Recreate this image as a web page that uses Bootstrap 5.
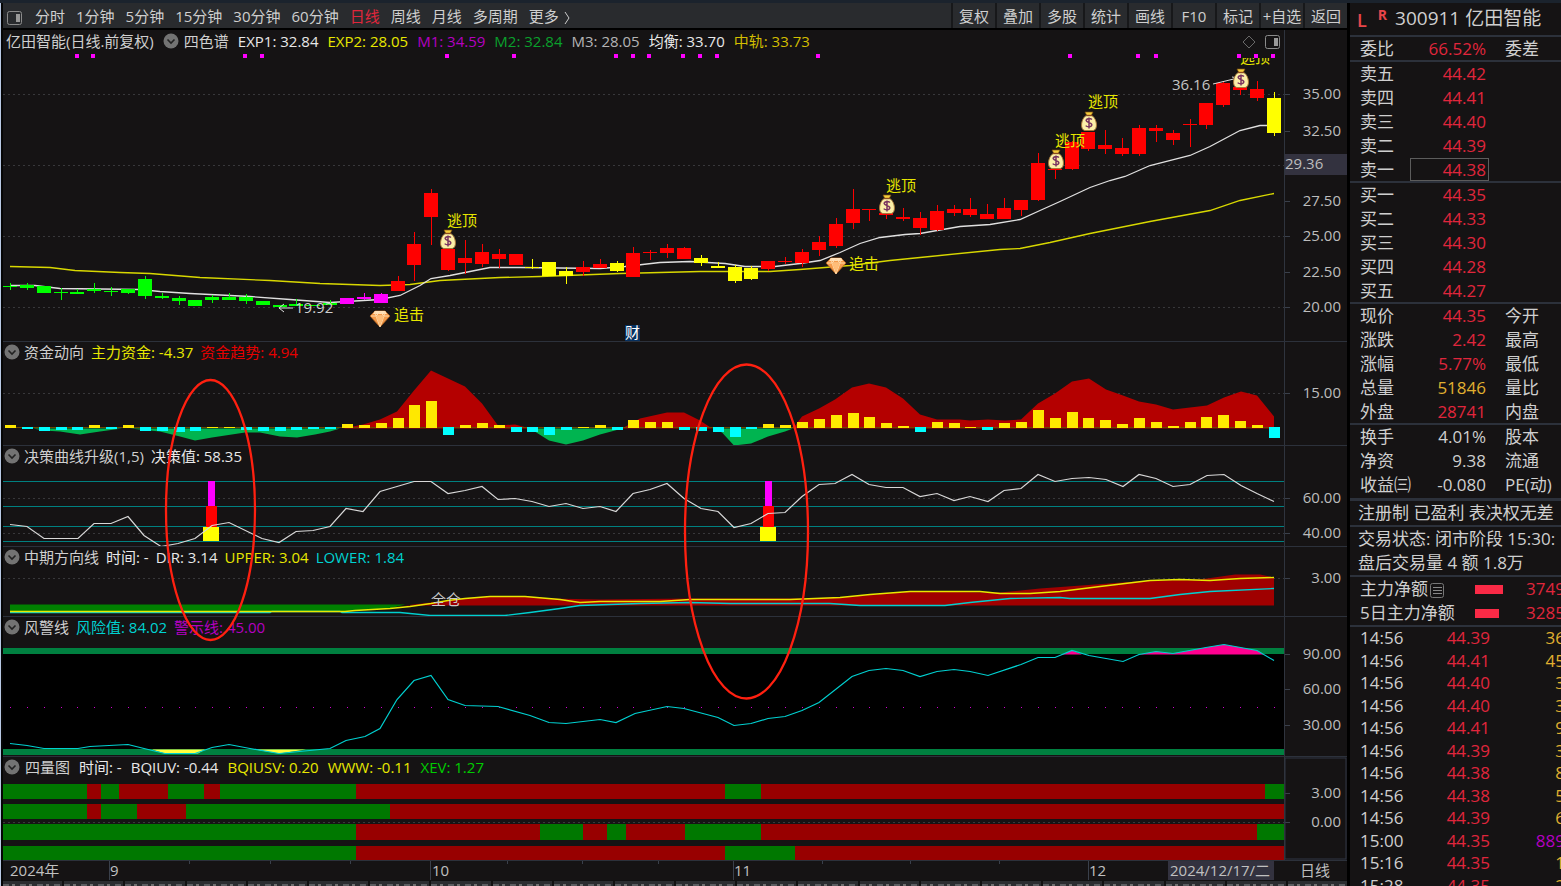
<!DOCTYPE html>
<html lang="zh-CN">
<head>
<meta charset="utf-8">
<meta name="viewport" content="width=device-width, initial-scale=1">
<title>亿田智能 300911 日线</title>
<link href="https://cdn.jsdelivr.net/npm/bootstrap@5.3.0/dist/css/bootstrap.min.css" rel="stylesheet">
<style>
:root{--panel:#151314;--line:#2c313b;--ink:#cfcfcf;--up:#e0263c;--gold:#e0b030}
body{background:#000;color:var(--ink);font:15px/20px "Open Sans","Noto Sans CJK SC",sans-serif;overflow:hidden}
.top-edge{height:3px;background:#1b232d}
.left-edge{width:3px;background:linear-gradient(90deg,#b9c9e4 0 1px,#050505 1px)}
.main-col{min-width:0}
.tool-row{height:25px;background:#292b2e;margin-bottom:2px}
.tool-row button{background:none;border:0;padding:0;color:var(--ink);line-height:24px;white-space:nowrap}
.period-list{gap:11px;padding-left:3px}
.period-list .current{color:var(--up)}
.tool-row .act{width:44px;border-left:2px solid #17181a}
.pane{position:relative;min-height:0;background:var(--panel);border-bottom:1px solid var(--line)}
.pane>svg,.marks{position:absolute;left:0;top:0;width:100%;height:100%}
.marks{pointer-events:none;z-index:3}
.pane-head{position:relative;z-index:1;gap:7px;height:20px;white-space:nowrap;padding-left:1px}
.pane-head.first{margin-top:1px;padding-left:3px;gap:9px}
.pane-head.roomy{gap:9px}
.pane-head .nm{margin-left:-3px}
.pane-head.first .nm,.roomy .nm{margin-left:-4px}
.fold{border:0;background:none;padding:0;width:16px;height:20px;display:flex;align-items:center}
.w{color:#e8e8e8}.y{color:#e8e800}.m{color:#b400c0}.g{color:#0aa02c}.s{color:#b4b4b4}.o{color:#d2be00}.r{color:#e60000}.c{color:#00d2d2}.lg{color:#00cc00}
.pane svg text{fill:#bdbdbd}
.tabs-cut{height:6px;background:#111;gap:2px;overflow:hidden;padding-top:1px}
.tabs-cut span{flex:1;background:linear-gradient(#2b2d30 3px,#0000 3px),repeating-linear-gradient(90deg,#5c5e61 0 6px,#2b2d30 6px 9px,#707070 9px 12px,#2b2d30 12px 17px)}
.side{width:211px;flex:none;margin-left:3px;background:var(--panel);overflow:hidden;font-size:17px;line-height:24px;white-space:nowrap}
.side section{border-top:2px solid var(--line)}
.side-title{height:32px;font-size:19px;line-height:31px;gap:8px;padding-left:7px}
.side-title b{color:#e8464a;font-size:18px;line-height:34px;font-weight:600}
.side-title sup{font-size:14px;top:2px;line-height:14px;color:#e8464a;font-weight:700;align-self:flex-start;margin:3px 0 0 3px}
.quote{width:211px;table-layout:fixed;border-collapse:collapse;line-height:23px}
.quote td,.quote th{padding:0;font-weight:400}
.quote th{padding-left:10px}
.quote th+td{text-align:right}
.quote td:nth-child(3){padding-left:19px}
.five{height:119px}.three{height:71px}
.red{color:var(--up)}.gold{color:var(--gold)}.vio{color:#b400c0}
.cell{padding-right:3px;margin-right:-3px}
.picked{outline:1px solid #5c5c5c;outline-offset:-1px}
.ticks{width:215px;height:270px;table-layout:fixed;line-height:22px}
.ticks td{padding:0}.ticks td+td{text-align:right}
.ticks td:first-child{padding-left:10px}
.flow-row{padding-left:10px}
.flow-row .lab{width:115px}
.flow-bar{height:9px;background:#fa2a46;display:inline-block}
.flow-row .val{margin-left:auto;width:35px}
</style>
</head>
<body>
<div class="d-flex flex-column vh-100">
<div class="top-edge flex-shrink-0"></div>
<div class="d-flex flex-grow-1" style="min-height:0">
<div class="left-edge flex-shrink-0"></div>
<main class="main-col flex-grow-1 d-flex flex-column">
  <nav class="tool-row d-flex justify-content-between flex-shrink-0">
    <div class="d-flex period-list">
      <button aria-label="侧栏"><svg width="18" height="24"><rect x="1.500" y="6.500" width="14" height="13" rx="2" fill="none" stroke="#8b8b8b"/><rect x="10" y="9" width="4" height="8" fill="#999"/></svg></button>
      <button>分时</button><button>1分钟</button><button>5分钟</button><button>15分钟</button><button>30分钟</button><button>60分钟</button><button class="current">日线</button><button>周线</button><button>月线</button><button>多周期</button><button>更多 <svg width="9" height="16" viewBox="0 0 9 16"><path d="M2 3 6 9 2 15" fill="none" stroke="#ccc"/></svg></button>
    </div>
    <div class="d-flex">
      <button class="act">复权</button><button class="act">叠加</button><button class="act">多股</button><button class="act">统计</button><button class="act">画线</button><button class="act">F10</button><button class="act">标记</button><button class="act">+自选</button><button class="act">返回</button>
    </div>
  </nav>
  <div class="position-relative flex-grow-1 d-flex flex-column" id="stack" style="min-height:0">
    <div class="pane" data-top="30" data-h="312"><svg></svg><div class="pane-head first d-flex"><span>亿田智能(日线.前复权)</span><button class="fold" aria-label="指标菜单"></button><span class="nm">四色谱</span><span class="w">EXP1: 32.84</span><span class="y">EXP2: 28.05</span><span class="m">M1: 34.59</span><span class="g">M2: 32.84</span><span class="s">M3: 28.05</span><span class="w">均衡: 33.70</span><span class="o">中轨: 33.73</span></div></div>
    <div class="pane" data-top="342" data-h="104"><svg></svg><div class="pane-head d-flex"><button class="fold" aria-label="指标菜单"></button><span class="nm">资金动向</span><span class="y">主力资金: -4.37</span><span class="r">资金趋势: 4.94</span></div></div>
    <div class="pane" data-top="446" data-h="101"><svg></svg><div class="pane-head d-flex"><button class="fold" aria-label="指标菜单"></button><span class="nm">决策曲线升级(1,5)</span><span class="w">决策值: 58.35</span></div></div>
    <div class="pane" data-top="547" data-h="70"><svg></svg><div class="pane-head d-flex"><button class="fold" aria-label="指标菜单"></button><span class="nm">中期方向线</span><span class="w">时间: -</span><span class="w">DIR: 3.14</span><span class="y">UPPER: 3.04</span><span class="c">LOWER: 1.84</span></div></div>
    <div class="pane" data-top="617" data-h="140"><svg></svg><div class="pane-head d-flex"><button class="fold" aria-label="指标菜单"></button><span class="nm">风警线</span><span class="c">风险值: 84.02</span><span class="m">警示线: 45.00</span></div></div>
    <div class="pane" data-top="757" data-h="104"><svg></svg><div class="pane-head roomy d-flex"><button class="fold" aria-label="指标菜单"></button><span class="nm">四量图</span><span class="w">时间: -</span><span class="w">BQIUV: -0.44</span><span class="y">BQIUSV: 0.20</span><span class="y">WWW: -0.11</span><span class="lg">XEV: 1.27</span></div></div>
    <div class="pane border-0" data-top="861" data-h="19"><svg></svg></div>
    <svg class="marks" id="marks"></svg>
  </div>
  <div class="tabs-cut d-flex flex-shrink-0" id="tabs"></div>
</main>
<aside class="side">
  <div class="side-title d-flex"><b>L</b><sup>R</sup><span>300911 亿田智能</span></div>
  <section><table class="quote" data-rows="委比,66.52%,委差"></table></section>
  <section><table class="quote five" data-rows="卖五,44.42,|卖四,44.41,|卖三,44.40,|卖二,44.39,|卖一,44.38,"></table></section>
  <section><table class="quote five" data-rows="买一,44.35,|买二,44.33,|买三,44.30,|买四,44.28,|买五,44.27,"></table></section>
  <section class="pb-px"><table class="quote five" data-rows="现价,44.35,今开|涨跌,2.42,最高|涨幅,5.77%,最低|总量,51846,量比,gold|外盘,28741,内盘"></table></section>
  <section style="padding-bottom:2px"><table class="quote three" data-rows="换手,4.01%,股本,n|净资,9.38,流通,n|收益㈢,-0.080,PE(动),n"></table></section>
  <section style="border-top-width:3px"><div class="px-2">注册制 已盈利 表决权无差</div></section>
  <section><div class="px-2">交易状态: 闭市阶段 15:30:</div><div class="px-2">盘后交易量 4 额 1.8万</div></section>
  <section>
    <div class="flow-row d-flex align-items-center"><span class="lab">主力净额<svg width="17" height="18" viewBox="0 0 17 18"><rect x="2.500" y="2.500" width="13" height="14" rx="2" fill="none" stroke="#777"/><path d="M5 6.500h9M5 9.500h9M5 12.500h9" stroke="#888"/></svg></span><span class="flow-bar" style="width:28px"></span><span class="val red">3749</span></div>
    <div class="flow-row d-flex align-items-center"><span class="lab">5日主力净额</span><span class="flow-bar" style="width:24px"></span><span class="val red">3285</span></div>
  </section>
  <section><table class="ticks" id="ticks"></table></section>
</aside>
</div>
</div>
<script src="https://cdn.jsdelivr.net/npm/bootstrap@5.3.0/dist/js/bootstrap.bundle.min.js"></script>
<script>
// quote and tick tables
document.querySelectorAll('.quote').forEach(t=>{
  t.innerHTML='<colgroup><col style="width:60px"><col style="width:76px"><col></colgroup>'+t.dataset.rows.split('|').map(r=>{
    const [a,b,c,k]=r.split(',');
    return `<tr><th scope="row">${a}</th><td class="${k==='n'?'':k||'red'}"><div class="cell ${a==='卖一'?'picked':''}">${b}</div></td><td>${c||''}</td></tr>`;
  }).join('');
});
document.getElementById('ticks').innerHTML='<colgroup><col style="width:70px"><col style="width:70px"><col></colgroup>'+
 [['14:56','44.39','36'],['14:56','44.41','45'],['14:56','44.40','3'],['14:56','44.40','3'],['14:56','44.41','9'],['14:56','44.39','3'],['14:56','44.38','8'],['14:56','44.38','5'],['14:56','44.39','6'],['15:00','44.35','889'],['15:16','44.35','1'],['15:28','44.35','2']]
 .map(r=>`<tr><td>${r[0]}</td><td class="red">${r[1]}</td><td class="${r[2]==='889'?'vio':'gold'}">${r[2]}</td></tr>`).join('');
document.getElementById('tabs').innerHTML='<span></span>'.repeat(22);
document.querySelectorAll('.fold').forEach(b=>b.innerHTML='<svg width="16" height="16" viewBox="0 0 16 16"><circle cx="8" cy="8" r="7.5" fill="#737373"/><path d="M4.5 6.5 8 10l3.5-3.5" fill="none" stroke="#222" stroke-width="1.6"/></svg>');

// candles: colour, body top, body bottom, high, low
const candles=`g286,287,283,290 g285,288,283,290 g286,293,286,293 g292,293,288,300 g292,294,289,294 g289,291,283,293 g291,292,287,296 g289,293,289,294 g279,296,276,299 g296,298,293,299 g298,301,296,305 g300,306,300,306 g297,300,295,303 g297,300,293,300 g297,301,294,304 g301,305,301,305 g305,307,305,307 g304,306,299,306 g305,306,305,306 g303,305,300,305 m298,304,298,304 m297,299,293,300 m294,303,293,303 r281,291,276,291 r244,265,232,281 r193,217,189,245 r249,270,236,271 r258,263,240,274 r252,264,244,267 r254,259,249,268 r254,265,254,265 y267,268,259,269 y262,276,262,276 y271,276,267,284 r267,272,261,276 r264,268,259,268 y263,271,261,272 r253,277,247,277 r252,253,250,260 r248,253,244,258 r248,259,247,259 y258,263,255,266 y266,268,262,268 y267,281,265,283 y268,279,266,280 r261,269,261,271 r261,262,257,264 r252,263,249,267 r242,250,236,256 r224,246,218,248 r209,223,189,229 r209,210,209,221 r213,215,211,219 r217,219,208,221 r218,228,212,235 r211,230,205,231 r209,213,205,216 r209,215,198,217 r214,219,204,219 r208,219,198,219 r200,210,200,216 r163,200,153,201 r169,170,160,179 r142,169,141,170 r132,149,132,151 r145,149,130,154 r148,154,138,156 r128,154,125,156 r128,131,125,142 r133,140,130,145 r124,125,119,147 r103,125,103,129 r83,105,82,107 r87,90,84,95 r89,98,81,101 y98,133,92,136`.split(' ');
const hue={g:'#00ff00',m:'#ff00ff',r:'#ff0000',y:'#ffff00'};
const flow=[3,-1,-3,-2,-2,3,-1,3,-3,-3,-4,-3,1,1,-2,-3,-3,-2,-1,-1,4,3,5,10,23,27,-7,3,5,3,-4,-4,-7,-2,1,3,-2,8,6,6,-2,-3,-4,-9,-1,4,3,6,9,13,15,11,5,2,-4,6,5,1,-2,5,6,18,10,16,10,8,4,10,6,2,6,11,13,7,3,-10];
const ma1='10,285 35,285 60,288 140,289 160,291 190,293 250,296 290,299 330,302 380,299 400,295 420,285 431,278 450,275 470,271 490,267 520,267 600,268 625,266 660,262 690,261 725,263 745,266 775,266 800,263 820,260 840,252 860,243 880,237 905,234 920,233 960,226 990,224 1020,219 1040,210 1060,201 1090,187 1110,180 1125,176 1150,165 1190,155 1210,146 1225,138 1240,130 1260,125 1270,125';
const ma2='10,266 50,267 75,270 120,272 150,273 200,277 270,280 320,283 380,285 410,284 440,280 500,277 540,276 620,273 700,271 770,271 800,269 850,265 890,260 930,256 1000,249 1020,248 1050,242 1090,233 1150,221 1210,210 1240,200 1274,193';
const redHill=['343,428 363,424 380,419 397,411 414,390 431,370 448,378 465,386 482,403 498,425 515,424 530,428','622,428 640,418 667,412 684,412 700,420 712,428','793,428 802,416 819,408 835,399 852,387 869,383 886,387 903,398 920,414 937,419 960,419 970,420 988,419 1005,420 1021,419 1038,403 1055,393 1072,381 1089,378 1106,389 1123,395 1139,401 1156,404 1173,409 1207,405 1224,397 1241,391 1257,395 1274,416 1274,428'];
const greenHill=['33,428 44,430 60,431 80,434 100,431 122,428','130,428 160,431 180,436 195,440 212,437 245,432 260,432 280,436 297,437 315,434 330,431 340,428','530,428 549,440 566,444 583,440 600,434 615,430 622,428','712,428 722,432 734,445 751,443 768,436 785,431 793,428'];
const decide='10,524 27,526 44,538 78,538 94,523 111,523 128,516 144,535 161,546 178,543 195,538 212,525 229,522 262,538 279,542 296,531 313,530 330,526 346,508 363,511 380,491 397,486 414,481 431,481 448,493 465,490 482,486 498,499 515,498 532,501 549,506 566,503 583,508 600,506 616,511 633,493 650,489 667,483 684,498 701,508 718,511 734,527 751,523 768,513 785,512 802,496 819,484 835,483 852,474 869,484 886,487 903,487 920,496 937,493 954,500 970,496 988,501 1004,490 1021,488 1038,474 1055,481 1072,478 1089,477 1106,479 1123,486 1139,474 1156,478 1173,486 1190,484 1207,475 1224,474 1241,485 1257,493 1274,501';
const risk='10,743 27,745 44,748 78,748 90,746 128,744 144,748 165,753 195,753 212,747 229,744 250,748 279,753 330,748 346,740 365,736 380,728 397,699 414,680 431,675 448,699 465,705 498,706 530,715 549,722 566,723 600,719 616,722 635,713 667,706 684,708 718,717 734,725 751,723 768,718 785,716 802,710 819,702 852,676 869,670 886,668 903,670 920,676 937,671 954,669 970,671 988,675 1021,664 1038,657 1055,657 1072,650 1089,655 1123,661 1139,654 1156,651 1173,653 1206,647 1224,644 1257,650 1274,660';
const strips=[[784,15,[87,101,119,168,204,220,356,725,761,1265,1284]],[804,15,[87,101,137,186,390,1284]],[824,16,[356,540,583,607,626,685,761,1257,1284]],[846,15,[356,725,795,1284]]];

const bag='<g><path d="M-4-10h8l-2 4h-4z" fill="#f5cf3c" stroke="#7a4a10" stroke-width=".7"/><path d="M-2.500-6.500h5C8-4 9.500 8 4 8.500H-4C-9.500 8-8-4-2.500-6.500z" fill="#fbf0a8" stroke="#a8783a"/><path d="M-3-6.500h6" stroke="#8a4a20" stroke-width="1.400"/><path d="M3-2.500C1-4-3-3.500-2.800-1.300-2.500.8 3 .3 2.800 3 2.500 5.300-2 5.200-3.300 3.600M0-4.500V6.500" fill="none" stroke="#7a3560" stroke-width="1.500"/></g>';
const gem='<g><path d="M-5-7H5l5 5L0 9-10-2z" fill="#f59a4a" stroke="#b86420" stroke-width=".8"/><path d="M-5-7H5l2 3H-7z" fill="#ffe0b8"/><path d="M-9-2H9M-4-2 0 9 4-2M-5-7l1 5 4-4 4 4 1-5" fill="none" stroke="#ffd9a8"/><path d="M-4-2H4L0 7z" fill="#ffbd78"/></g>';

function draw(){
 const panes=[...document.querySelectorAll('.pane')];
 panes.forEach(p=>{const h=p.dataset.h;p.style.flex=`${h} ${h} ${h}px`});
 panes.forEach((p,n)=>{
  const T=+p.dataset.top,H=p.clientHeight+(n<6?1:0),W=p.clientWidth,kx=(W-63)/1281,ky=H/p.dataset.h,R=W-63;
  const X=x=>(x-3)*kx,Y=y=>(y-T)*ky;
  const P=s=>s.split(' ').map(q=>{const[a,b]=q.split(',');return X(+a).toFixed(1)+','+(Y(+b)+.5).toFixed(1)}).join(' ');
  const box=(x,y,w,h,f)=>`<rect x="${X(x)}" y="${Y(y)}" width="${w*kx}" height="${h*ky}" fill="${f}" shape-rendering="crispEdges"/>`;
  const poly=(s,c,w=1)=>`<polyline points="${P(s)}" fill="none" stroke="${c}" stroke-width="${w}"/>`;
  const area=(s,c)=>`<polygon points="${P(s)}" fill="${c}"/>`;
  const grid=y=>`<path d="M0 ${Y(y)+.5}H${R}" stroke="#38383b" stroke-dasharray="2 3"/>`;
  const label=(y,t)=>`<path d="M${R} ${Y(y)+.5}h6" stroke="#3a404b"/><text x="${W-6}" y="${Y(y)+5}" text-anchor="end">${t}</text>`;
  const txt=(x,y,t,f)=>`<text x="${X(x)}" y="${Y(y)+5}" style="fill:${f}">${t}</text>`;
  const at=(x,y,s)=>`<g transform="translate(${X(x)} ${Y(y)})">${s}</g>`;
  let s='';
  if(n===0){
   s+=[94,165,236,307].map(grid).join('')+[[94,'35.00'],[131,'32.50'],[201,'27.50'],[236,'25.00'],[272,'22.50'],[307,'20.00']].map(a=>label(...a)).join('');
   s+=poly(ma2,'#d8d800',1.3)+poly(ma1,'#e0e0e0',1.3);
   candles.forEach((c,i)=>{const f=hue[c[0]],[a,b,h,l]=c.slice(1).split(',').map(Number),x=Math.round(10+i*16.85);s+=box(x-7,a,14,b-a,f)+box(x,h,1,l-h,f)});
   s+='<clipPath id="plot"><rect y="28" width="100%" height="100%"/></clipPath><g clip-path="url(#plot)">';
   [[447,221],[886,186],[1055,141],[1088,102],[1240,58]].forEach(a=>s+=txt(a[0],a[1],'逃顶','#e6e600'));
   s+='</g>'+txt(394,315,'追击','#e6e600')+txt(849,264,'追击','#e6e600');
   [77,93,245,262,447,514,616,633,649,683,700,717,818,1070,1138,1156,1239,1256,1273].forEach(x=>s+=box(x-2,54,4,4,'#ff00ff'));
   s+=txt(295,308,'19.92','#d0d0d0')+`<path d="M${X(293)} ${Y(308)}H${X(279)}m5-4-5 4 5 4" fill="none" stroke="#ddd"/>`;
   s+=txt(1172,85,'36.16','#c4c4c4')+`<path d="M${X(1213)} ${Y(84)}L${X(1238)} ${Y(78)}m-6-1 6 1-4 4" fill="none" stroke="#ddd"/>`;
   [[448,240],[887,205],[1056,160],[1089,122],[1241,79]].forEach(a=>s+=at(a[0],a[1],bag));
   s+=at(380,318,gem)+at(836,265,gem);
   s+=box(625,325,15,16,'#06305f')+txt(625,333,'财','#fff');
   s+=`<rect x="${R}" y="${Y(154)}" width="63" height="21" fill="#33323f"/><text x="${R+1}" y="${Y(169)}">29.36</text>`;
   s+=at(1249,42,'<path d="M0-6 6 0 0 6-6 0z" fill="none" stroke="#696969"/>')+at(1272,42,'<rect x="-6.500" y="-6.500" width="14" height="13" rx="2" fill="none" stroke="#8b8b8b"/><rect x="2" y="-4" width="4" height="8" fill="#999"/>');
  }
  if(n===1){
   s+=grid(393)+label(393,'15.00')+redHill.map(a=>area(a,'#b40000')).join('')+greenHill.map(a=>area(a,'#00b450')).join('');
   s+=box(10,427,1264,1,'#6b4a00');
   flow.forEach((v,i)=>{const x=Math.round(10+i*16.85)-5;s+=v>0?box(x,428-v,11,v,'#ffe800'):box(x,427,11,1-v,'#00ffff')});
  }
  if(n===2){
   s+=[498,533].map(grid).join('')+[481,506,526,541].map(y=>box(3,y,1281,1,'#008080')).join('')+label(498,'60.00')+label(533,'40.00');
   [211,768].forEach(x=>s+=box(x-3,481,7,25,'#ff00ff')+box(x-5,506,11,21,'#ff0000')+box(x-8,527,16,14,'#ffff00'));
   s+=poly(decide,'#d8d8d8',1.2);
  }
  if(n===3){
   s+=grid(578)+label(578,'3.00')+area('10,604 405,604 390,608 345,611 10,611','#008000');
   s+=area('405,605 431,602 448,600 465,598 490,596 525,596 550,598 600,599 690,598 800,598 840,597 910,591 1000,592 1040,588 1150,580 1200,579 1235,574 1260,574 1274,577 1274,605','#a00000');
   s+=poly('10,612 270,612 272,611 340,611 342,612 400,612 430,615 505,615 530,612 560,608 580,605 640,603 690,602 730,603 830,603 860,605 945,605 970,602 1010,598 1060,597 1070,598 1150,598 1180,594 1210,591 1274,588','#00d0d0',1.3);
   s+=poly('10,611 345,611 355,610 390,608 410,606 431,603 448,600 465,598 490,596 525,596 560,599 580,602 600,601 660,601 690,599 790,599 840,597 870,594 910,591 980,591 1000,593 1030,593 1060,591 1100,586 1150,580 1180,579 1210,580 1240,578 1274,577','#e8e800',1.4)+txt(431,600,'全仓','#c8c8c8');
  }
  if(n===4){
   s+=box(3,654,1281,95,'#000')+box(3,648,1281,6,'#008040')+box(3,749,1281,6,'#008040');
   s+=area('152,749 165,753 198,753 205,749','#ffff40')+area('255,749 279,753 306,749','#ffff40')+area('1062,654 1072,650 1082,654','#ff0090')+area('1139,654 1156,651 1173,653 1206,647 1224,644 1257,650 1264,654','#ff0090');
   for(let i=0;i<76;i++)s+=box(Math.round(10+i*16.85),707,1,1,'#d000d0');
   s+=poly(risk,'#00d0d0',1.2)+label(654,'90.00')+label(689,'60.00')+label(725,'30.00');
  }
  if(n===5){
   strips.forEach(([y,h,e])=>{let a=3;e.forEach((b,i)=>{s+=box(a,y,b-a,h,i%2?'#980000':'#007800');a=b})});
   s+=grid(822)+label(793,'3.00')+label(822,'0.00')+`<rect x="${R+1}" y="1" width="61" height="${H-3}" fill="none" stroke="#303744"/>`;
  }
  if(n<6)s+=`<path d="M${R+.5} 0V${H}" stroke="#2f343e"/>`;
  else{
   [109,430,733,1088].forEach(x=>s+=box(x,861,1,19,'#3a404b'));
   [189,270,350,507,582,658,822,910,999].forEach(x=>s+=box(x,861,1,3,'#3a404b'));
   s+=box(1168,861,106,19,'#33323f');
   [[10,'2024年'],[110,'9'],[432,'10'],[734,'11'],[1089,'12'],[1170,'2024/12/17/二']].forEach(a=>s+=txt(a[0],871,a[1],'#c0c0c0'));
   s+=`<text x="${R+16}" y="15">日线</text>`;
  }
  p.querySelector('svg').innerHTML=s;
 });
 // highlight rings over the stacked panes
 const st=document.getElementById('stack'),kx=(st.clientWidth-63)/1281,ky=st.clientHeight/850;
 document.getElementById('marks').innerHTML=[[210.5,510,44.5,130],[746.5,531.5,61.5,167]].map(e=>`<ellipse cx="${(e[0]-3)*kx}" cy="${(e[1]-30)*ky}" rx="${e[2]*kx}" ry="${e[3]*ky}" fill="none" stroke="#ff2010" stroke-width="2.3"/>`).join('');
}
draw();addEventListener('resize',draw);
</script>
</body>
</html>
